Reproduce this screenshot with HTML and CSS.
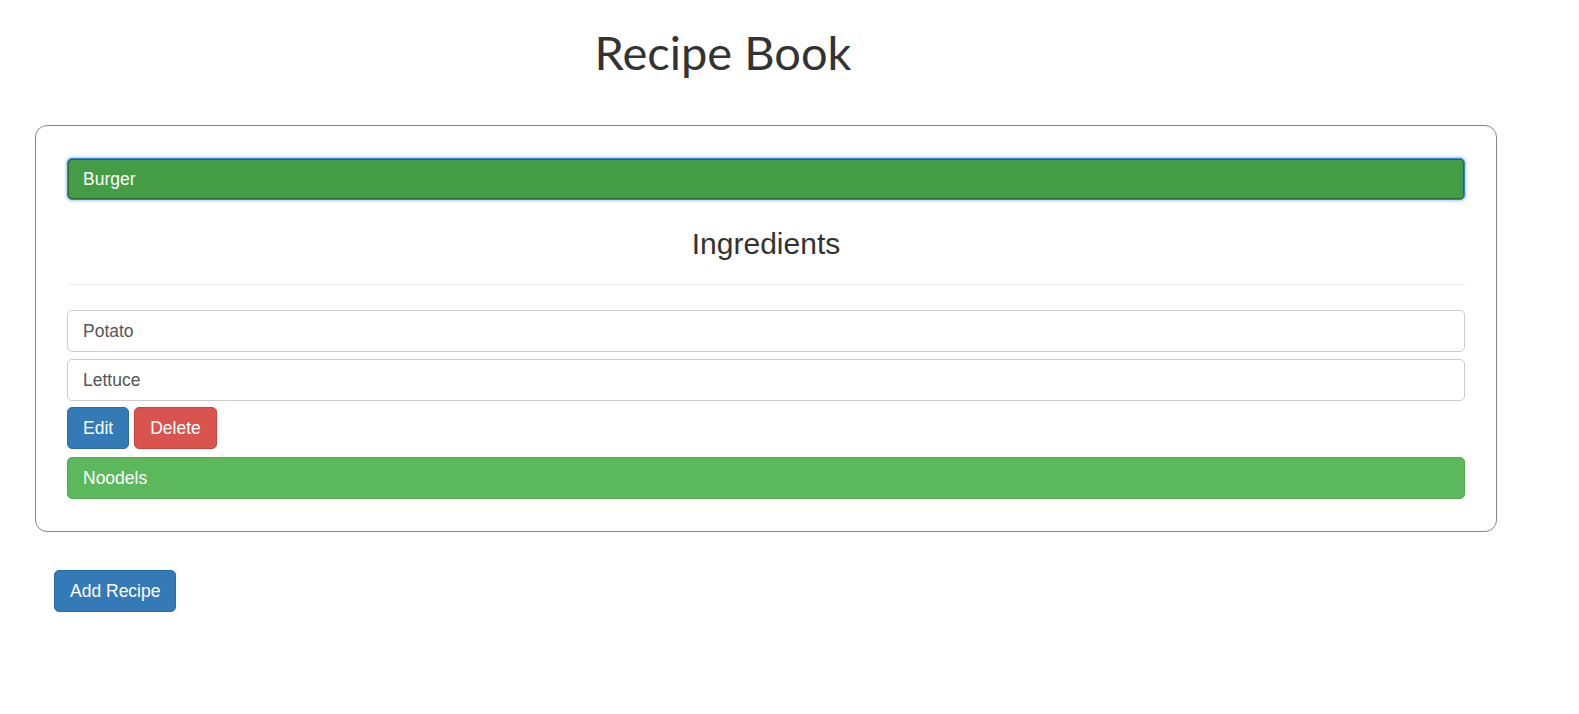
FILE: index.html
```html
<!DOCTYPE html>
<html lang="en">
<head>
<meta charset="utf-8">
<title>Recipe Book</title>
<link rel="stylesheet" href="styles.css">
</head>
<body>
<header class="title-wrap">
  <h1 class="title">Recipe Book</h1>
</header>
<main class="recipes">
  <button class="btn btn-recipe btn-focused">Burger</button>
  <section class="recipe-body">
    <h3 class="ingredients-title">Ingredients</h3>
    <hr class="divider">
    <div class="ingredient ingredient-first">Potato</div>
    <div class="ingredient ingredient-last">Lettuce</div>
    <div class="actions">
      <button class="btn btn-primary">Edit</button>
      <button class="btn btn-danger">Delete</button>
    </div>
  </section>
  <button class="btn btn-recipe">Noodels</button>
</main>
<div class="footer-actions">
  <button class="btn btn-primary">Add Recipe</button>
</div>
</body>
</html>
```

FILE: styles.css
```css
* {
  box-sizing: border-box;
}

body {
  margin: 0;
  background: #fff;
  font-family: "Liberation Sans", Arial, sans-serif;
  font-size: 17.5px;
  color: #333;
}

.title-wrap {
  width: 1446px;
  padding-top: 24px;
  text-align: center;
}

.title {
  margin: 0;
  font-family: Lato, "Liberation Sans", sans-serif;
  font-weight: 400;
  font-size: 47px;
  line-height: 1.2;
  color: #333;
}

.recipes {
  margin: 45px 0 0 35px;
  width: 1462px;
  border: 1px solid #858585;
  border-radius: 12px;
  padding: 32px 31px 32px;
  display: flex;
  flex-direction: column;
}

.btn {
  display: inline-block;
  font-family: "Liberation Sans", Arial, sans-serif;
  font-size: 17.5px;
  line-height: 25px;
  padding: 7.5px 15px;
  border: 1px solid transparent;
  border-radius: 5px;
  color: #fff;
  cursor: pointer;
  text-align: center;
  white-space: nowrap;
}

.btn-recipe {
  display: block;
  width: 100%;
  text-align: left;
  background: #5cb85c;
  border-color: #4cae4c;
}

.btn-focused {
  background: #449d44;
  border-color: #3a7fd8;
  box-shadow: inset 0 0 0 1px #2f6a2f, 0 0 3px 1px rgba(90, 150, 240, 0.55);
}

.btn-primary {
  background: #337ab7;
  border-color: #2e6da4;
}

.btn-danger {
  background: #d9534f;
  border-color: #d43f3a;
}

.recipe-body {
  display: flex;
  flex-direction: column;
}

.ingredients-title {
  margin: 27px 0 0;
  font-size: 30px;
  font-weight: 500;
  line-height: 33px;
  text-align: center;
  color: #333;
}

.divider {
  margin: 24px 0 25px;
  border: 0;
  border-top: 1px solid #eee;
  height: 0;
}

.ingredient {
  height: 42px;
  padding: 0 15px;
  line-height: 40px;
  border: 1px solid #ccc;
  border-radius: 5px;
  color: #555;
}

.ingredient-first {
  margin-bottom: 7px;
}

.ingredient-last {
  margin-bottom: 6px;
}

.actions {
  display: flex;
  gap: 5px;
  margin-bottom: 8px;
}

.footer-actions {
  padding: 38px 0 0 54px;
}
```
